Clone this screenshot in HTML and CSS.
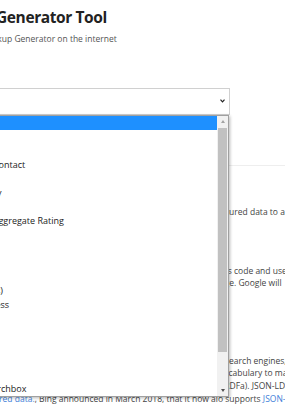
FILE: index.html
```html
<!DOCTYPE html>
<html lang="en">
<head>
    <meta charset="UTF-8">
    <meta name="viewport" content="width=device-width, initial-scale=1.0">
    <title>Schema Markup Generator Tool</title>
    <link rel="stylesheet" href="styles.css">
</head>
<body>
    <div class="page">
        <header class="header">
            <h1 class="title">Schema Markup Generator Tool</h1>
            <p class="subtitle">The most accurate Schema Markup Generator on the internet</p>
        </header>

        <div class="picker">
            <div class="select-box">
                <span class="select-value">Article</span>
                <svg class="chevron" viewBox="0 0 5 4"><path d="M0.5 0.7 L2.5 2.9 L4.5 0.7" fill="none" stroke="#222" stroke-width="1.2"/></svg>
            </div>
            <div class="dropdown">
                <ul class="options">
                    <li class="option selected">Article</li>
                    <li class="option">Breadcrumb</li>
                    <li class="option">Event</li>
                    <li class="option">Organization / Corporate Contact</li>
                    <li class="option">FAQ Page</li>
                    <li class="option">Customer Review Summary</li>
                    <li class="option">How-to</li>
                    <li class="option">Product Offer, Reviews &amp; Aggregate Rating</li>
                    <li class="option">Job Posting</li>
                    <li class="option">Person</li>
                    <li class="option">Recipe</li>
                    <li class="option">Course</li>
                    <li class="option">Article (Blog Posting / News)</li>
                    <li class="option">Organization / Local Business</li>
                    <li class="option">Video</li>
                    <li class="option">Movie</li>
                    <li class="option">Book</li>
                    <li class="option">Podcast</li>
                    <li class="option">Logo</li>
                    <li class="option">Website with a Sitelink Searchbox</li>
                </ul>
                <div class="scrollbar">
                    <div class="scroll-btn up"></div>
                    <div class="scroll-track"><div class="scroll-thumb"></div></div>
                    <div class="scroll-btn down"></div>
                </div>
            </div>
        </div>

        <section class="info">
            <p>You can use this free Schema Markup Generator tool to easily and quickly add valid structured data to any web page,<br>
            so that search engines can better understand it.</p>
            <p>Once you have selected the type of markup and filled in all of the needed details, copy this code and use<br>
            the free Structured Data Testing Tool to check it thoroughly before adding it into your page. Google will<br>
            then be able to show rich results for it.</p>
            <h3 class="info-title">What is Schema.org?</h3>
            <p>Schema.org is a shared project founded by Google, Bing, Yahoo, and Yandex, the largest search engines, to create a<br>
            one single structured data markup standard for the web, along with a common shared vocabulary to mark up<br>
            the entities on your web pages. It can be written in several different formats (Microdata, RDFa). JSON-LD is<br>
            the favoured format for <a href="#">structured data.</a>, Bing announced in March 2018, that it now alo supports <a href="#">JSON-LD</a>.</p>
        </section>
    </div>
</body>
</html>
```

FILE: styles.css
```css
html, body {
    margin: 0;
    overflow: hidden;
    background: #fff;
}

body {
    font-family: 'Open Sans', 'Segoe UI', sans-serif;
    color: #444;
}

.page {
    margin-left: -125px;
    padding-top: 6.5px;
}

.header {
    margin-left: -2.5px;
}

.title {
    margin: 0;
    font-size: 15.5px;
    line-height: 20px;
    font-weight: 700;
    letter-spacing: -0.4px;
    color: #222;
}

.subtitle {
    margin: 6.8px 0 0;
    font-size: 8.5px;
    line-height: 12px;
    color: #555;
}

.picker {
    position: relative;
    width: 355px;
    margin-top: 42.7px;
}

.select-box {
    box-sizing: border-box;
    height: 27px;
    border: 1px solid #d0d0d0;
    display: flex;
    align-items: center;
    justify-content: space-between;
    padding: 0 4px 0 10px;
    font-size: 9px;
    color: #222;
}

.chevron {
    width: 5px;
    height: 4px;
}

.dropdown {
    position: absolute;
    top: 100%;
    left: 0;
    width: 354px;
    box-sizing: border-box;
    display: flex;
    border: 1px solid #a0a0a0;
    background: #fff;
    box-shadow: 1px 1px 3px rgba(0, 0, 0, 0.28);
}

.options {
    flex: 1;
    list-style: none;
    margin: 0;
    padding: 0;
    font-size: 9px;
    color: #222;
}

.option {
    height: 14px;
    line-height: 14px;
    padding-left: 10px;
    white-space: nowrap;
}

.option.selected {
    background: #1e90ff;
    color: #fff;
}

.scrollbar {
    width: 11px;
    display: flex;
    flex-direction: column;
    background: #f1f1f1;
}

.scroll-btn {
    height: 11px;
    display: flex;
    align-items: center;
    justify-content: center;
}

.scroll-btn:after {
    content: '';
    border-left: 2.5px solid transparent;
    border-right: 2.5px solid transparent;
}

.scroll-btn.up:after {
    border-bottom: 3px solid #a3a3a3;
}

.scroll-btn.down:after {
    border-top: 3px solid #505050;
}

.scroll-track {
    flex: 1;
    padding-top: 1px;
}

.scroll-thumb {
    height: 224px;
    margin: 0 1px;
    background: #c1c1c1;
}

.info {
    margin-top: 50px;
    padding-top: 39.6px;
    border-top: 1px solid #eee;
    font-size: 8.5px;
    line-height: 12.8px;
}

.info p {
    margin: 0 0 33.4px;
    white-space: nowrap;
}

.info-title {
    margin: 0;
    font-size: 11px;
    line-height: 18.2px;
    color: #222;
}

.info a {
    color: #3f7fd9;
    text-decoration: none;
}
```
